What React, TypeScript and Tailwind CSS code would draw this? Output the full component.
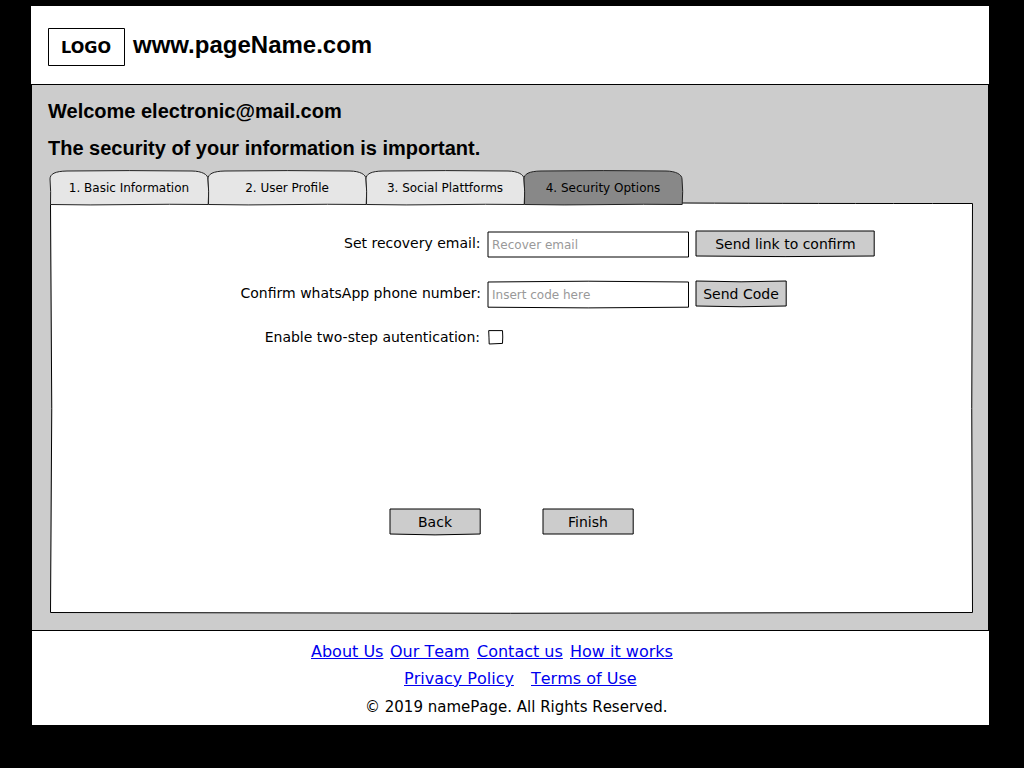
import type { ReactNode } from "react";

type SketchProps = { d: string; fill: string; className: string; stroke?: string; children?: ReactNode };

/* A box whose hand-drawn outline sits behind its content. */
function Sketch({ d, fill, className, stroke = "#000", children }: SketchProps) {
  return (
    <div className={`relative isolate shrink-0 ${className}`}>
      <svg className="absolute inset-0 -z-10 h-full w-full overflow-visible" aria-hidden="true">
        <path d={d} fill={fill} stroke={stroke} strokeWidth="1" strokeLinejoin="round" />
      </svg>
      {children}
    </div>
  );
}

const TAB =
  "M0.5 34.5 Q1 21 0 9 C0 4 5 1.2 17 1 Q79 0.2 142 1 C152 1.2 158 4.5 158 9 Q159.3 21 158.2 34.5 Q120 34 80 34.6 Q40 35.3 0.5 34.5 Z";

const tabs = ["1. Basic Information", "2. User Profile", "3. Social Plattforms", "4. Security Options"];

function Label({ children, className }: { children: ReactNode; className: string }) {
  return <label className={`shrink-0 text-right text-[14px] leading-[20px] whitespace-nowrap ${className}`}>{children}</label>;
}

function Link({ children, className = "" }: { children: ReactNode; className?: string }) {
  return (
    <a href="#" className={`shrink-0 whitespace-nowrap text-[#0000ee] underline ${className}`}>
      {children}
    </a>
  );
}

export default function App() {
  return (
    <div className="h-screen overflow-hidden bg-black pt-[6px] pl-[31px] font-['DejaVu_Sans',sans-serif] text-black">
      <header className="flex h-[78px] w-[958px] bg-white pt-[22px] pl-[17px]">
        <Sketch
          className="h-[38px] w-[77px] pt-[8px] pr-px text-center text-[16px] leading-[24px] font-bold"
          fill="#fff"
          d="M0.5 0.5 L76.5 0.5 L76.5 37.5 L0.5 37.5 Z"
        >
          LOGO
        </Sketch>
        <h1 className="pt-[2px] pl-[8px] font-['Liberation_Sans',sans-serif] text-[24px] leading-[30px] font-bold">
          www.pageName.com
        </h1>
      </header>

      <main className="ml-px h-[547px] w-[956px] border-y border-black bg-[#cccccc] pl-[16px]">
        <div className="h-[85px] pt-[14px] font-['Liberation_Sans',sans-serif] text-[20px] leading-[24px] font-bold">
          <p>Welcome electronic@mail.com</p>
          <p className="pt-[13px]">The security of your information is important.</p>
        </div>

        <nav className="relative z-10 flex h-[34px] pl-[2px]">
          {tabs.map((name, i) => (
            <Sketch
              key={name}
              className="flex h-[35px] w-[158px] justify-center pt-[9px] text-[12px] leading-[18px] whitespace-nowrap"
              fill={i === 3 ? "#888888" : "#e6e6e6"}
              stroke="#222"
              d={TAB}
            >
              {name}
            </Sketch>
          ))}
        </nav>

        <Sketch
          className="ml-[2px] h-[409px] w-[923px] pt-[26px]"
          fill="#fff"
          d="M0.5 0.5 Q3 205 0.5 408.5 Q460 410 922.5 408.5 Q921 205 922.5 -0.5 Q760 -0.4 632 -1 L0.5 -0.5 Z"
        >
          <div className="flex h-[50px]">
            <Label className="w-[431px] pt-[3px] pr-[0.5px]">Set recovery email:</Label>
            <Sketch
              className="mt-[2px] ml-[7px] h-[26px] w-[201px] pt-[4px] pl-[4px] text-[12px] leading-[18px] text-[#999999] [font-kerning:none]"
              fill="#fff"
              d="M0 0 H200.5 V25 H0 Z"
            >
              Recover email
            </Sketch>
            <Sketch
              className="mt-px ml-[7px] h-[26px] w-[179px] pt-[3px] text-center text-[14px] leading-[20px]"
              fill="#cccccc"
              d="M0 0 H178.2 V25 Q89 26.2 0 25 Z"
            >
              Send link to confirm
            </Sketch>
          </div>
          <div className="flex h-[50px]">
            <Label className="w-[431px] pt-[3px]">Confirm whatsApp phone number:</Label>
            <Sketch
              className="mt-[2px] ml-[7px] h-[26px] w-[201px] pt-[4px] pl-[4px] text-[12px] leading-[18px] text-[#999999] [font-kerning:none]"
              fill="#fff"
              d="M0 0 Q100 -1.6 200.5 0 V25.2 Q100 26.6 0 25.2 Z"
            >
              Insert code here
            </Sketch>
            <Sketch
              className="mt-px ml-[7px] h-[26px] w-[90px] pt-[3px] text-center text-[14px] leading-[20px]"
              fill="#cccccc"
              d="M0 0 Q45 1.6 90.2 0 V25 Q45 26.5 0 25 Z"
            >
              Send Code
            </Sketch>
          </div>
          <div className="flex h-[178px]">
            <Label className="-mt-[3px] w-[430px]">Enable two-step autentication:</Label>
            <Sketch
              className="ml-[9px] h-[14px] w-[14px]"
              fill="#fff"
              d="M-0.3 0.6 H13.5 Q14 7 13.5 13.4 L0.2 14 Q0 7 -0.3 0.6 Z"
            />
          </div>
          <div className="flex gap-[63px] pl-[340px]">
            <Sketch
              className="mt-px h-[26px] w-[90px] pt-[3px] text-center text-[14px] leading-[20px]"
              fill="#cccccc"
              d="M0 0 H90.2 V25 Q45 26.8 0 25 Z"
            >
              Back
            </Sketch>
            <Sketch
              className="mt-px h-[26px] w-[90px] pt-[3px] text-center text-[14px] leading-[20px]"
              fill="#cccccc"
              d="M0 0 H90.2 V25 H0 Z"
            >
              Finish
            </Sketch>
          </div>
        </Sketch>
      </main>

      <footer className="ml-px h-[94px] w-[957px] bg-white pt-[11px] text-[16px] leading-[20px] [font-kerning:none]">
        <div className="flex pl-[279px]">
          <Link className="w-[79px]">About Us</Link>
          <Link className="w-[87px]">Our Team</Link>
          <Link className="w-[93px]">Contact us</Link>
          <Link>How it works</Link>
        </div>
        <div className="flex pt-[7px] pl-[372px]">
          <Link className="w-[127px]">Privacy Policy</Link>
          <Link>Terms of Use</Link>
        </div>
        <p className="pt-[8px] pl-[333px] text-[15px]">© 2019 namePage. All Rights Reserved.</p>
      </footer>
    </div>
  );
}
